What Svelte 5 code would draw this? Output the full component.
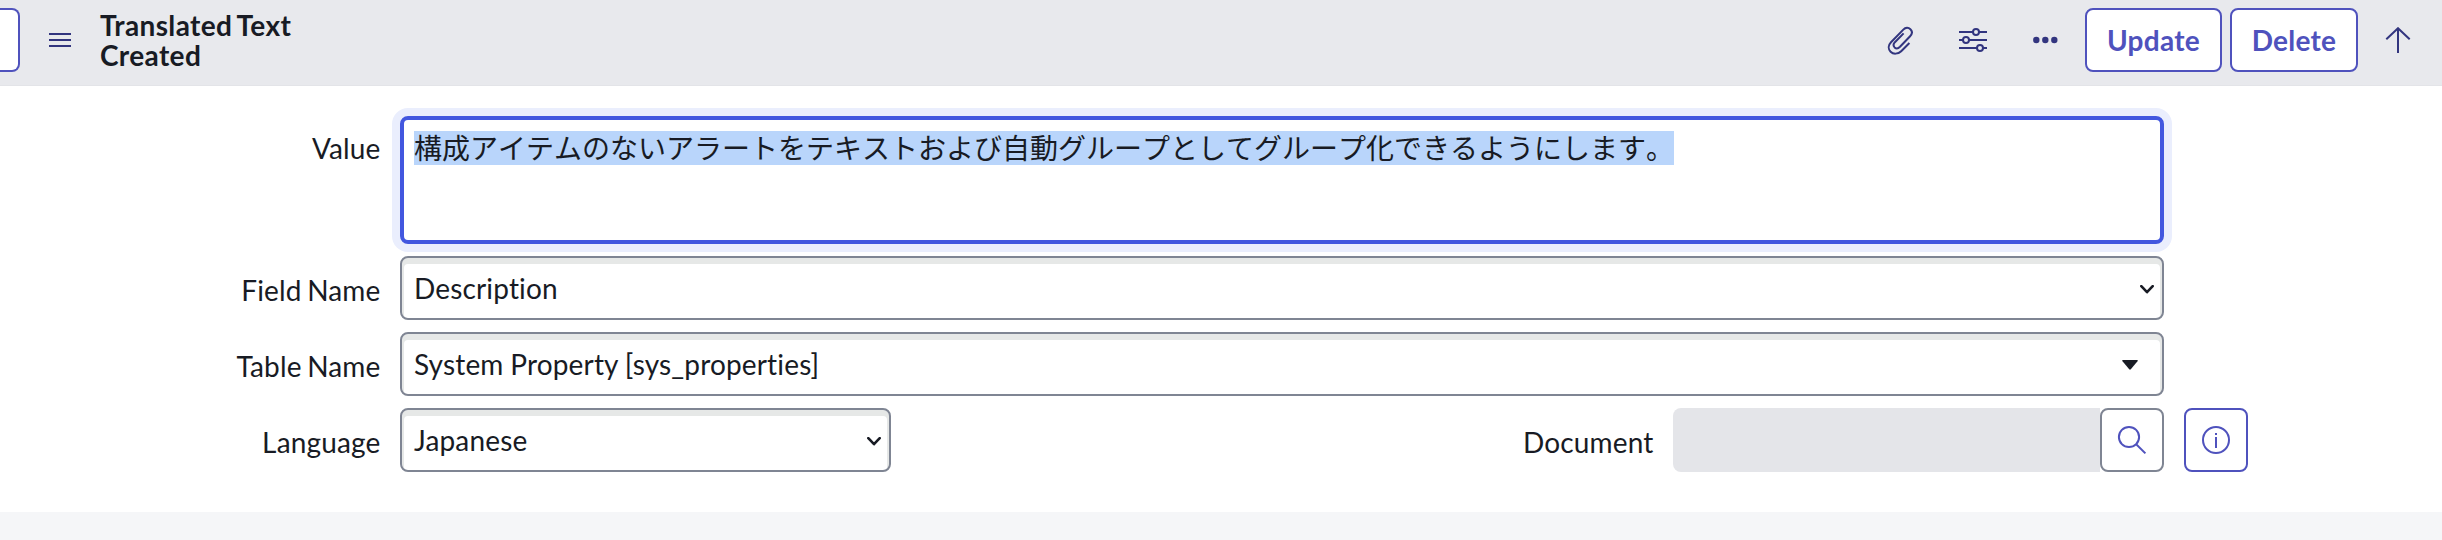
<script>
  let title = 'Translated Text';
  let subtitle = 'Created';
  let value = '構成アイテムのないアラートをテキストおよび自動グループとしてグループ化できるようにします。';
</script>

{#snippet chevron()}
  <svg class="chevron" width="14" height="9" viewBox="0 0 14 9"><path d="M1.3 1.2L7 7.2L12.7 1.2" /></svg>
{/snippet}

<div class="page">
  <header>
    <button class="back" aria-label="Back"></button>
    <svg class="icon menu" width="22" height="14" viewBox="0 0 22 14"><path d="M0 1H22M0 7H22M0 13H22" /></svg>
    <div class="title"><div>{title}</div><div>{subtitle}</div></div>
    <div class="actions">
      <svg class="icon clip" width="26" height="30" viewBox="0 0 26 30">
        <path d="M22.4 18L14.2 26.2C10.9 29.4 6.2 29.3 3.6 26.7C1 24.1 1.1 20.2 4 17.2L16.3 4.6C18.5 2.4 21.4 2.3 23.4 4.2C25.4 6.2 25.2 9 23.1 11.2L13 21.8C11.2 23.6 9.1 23.8 7.6 22.4C6.1 20.9 6.3 19 7.9 17.2L16.6 8.4" />
      </svg>
      <svg class="icon sliders" width="28" height="24" viewBox="0 0 28 24">
        <path d="M0 4H14M20 4H28M0 12H4M10 12H28M0 20H18M24 20H28" />
        <circle cx="17" cy="4" r="3" /><circle cx="7" cy="12" r="3" /><circle cx="21" cy="20" r="3" />
      </svg>
      <svg class="dots" width="25" height="8" viewBox="0 0 25 8">
        <circle cx="3.3" cy="4" r="3.2" /><circle cx="12.3" cy="4" r="3.2" /><circle cx="21.3" cy="4" r="3.2" />
      </svg>
      <button class="btn update">Update</button>
      <button class="btn delete">Delete</button>
      <svg class="icon up" width="26" height="26" viewBox="0 0 26 26"><path d="M13 26V1.5M1.3 12.2L13 1.2L24.7 12.2" /></svg>
    </div>
  </header>

  <main>
    <div class="row value-row">
      <span class="label">Value</span>
      <div class="textarea"><span class="selected">{value}</span></div>
    </div>
    <div class="row">
      <span class="label">Field Name</span>
      <div class="select">Description{@render chevron()}</div>
    </div>
    <div class="row">
      <span class="label">Table Name</span>
      <div class="select table">System Property [sys_properties]
        <svg width="16" height="10" viewBox="0 0 16 10"><path d="M.8 0H15.2Q16.4 0 15.5 1.2L8.8 9.3Q8 10.2 7.2 9.3L.5 1.2Q-.4 0 .8 0Z" /></svg>
      </div>
    </div>
    <div class="row">
      <span class="label">Language</span>
      <div class="select short">Japanese{@render chevron()}</div>
      <span class="label document">Document</span>
      <div class="readonly"></div>
      <button class="square search" aria-label="Search">
        <svg class="icon" width="30" height="30" viewBox="0 0 30 30"><circle cx="12" cy="12" r="10.1" /><path d="M19.2 19.2L28.4 28.4" /></svg>
      </button>
      <button class="square info" aria-label="Information">
        <svg class="icon" width="30" height="30" viewBox="0 0 30 30"><circle cx="15" cy="15" r="13" /><path d="M15 12V23M15 8V10" /></svg>
      </button>
    </div>
  </main>
</div>

<style>
  :global(body) { margin: 0; background: #f5f6f8; }
  .page {
    width: 2442px; height: 540px; overflow: hidden;
    font: 28px/60px Lato, "Noto Sans CJK JP", sans-serif; color: #181b24; background: #f5f6f8;
    font-variant-ligatures: none; letter-spacing: 0.16px;
  }
  header {
    display: flex; align-items: center; box-sizing: border-box; height: 86px;
    padding: 0 31px 5px 0; background: #e8e9ed; border-bottom: 1px solid #e3e4e8;
  }
  button { display: block; box-sizing: border-box; margin: 0; padding: 0; height: 64px; background: #fff; border: 2px solid #4f52bd; border-radius: 8px; font: inherit; flex: none; }
  .back { width: 20px; border-left: 0; border-radius: 0 8px 8px 0; }
  svg { display: block; flex: none; }
  .icon { fill: none; stroke: #32357f; stroke-width: 2; }
  .menu { margin-left: 29px; }
  .title { margin-left: 29px; font-weight: 700; line-height: 30px; white-space: nowrap; letter-spacing: 0.36px; word-spacing: -2px; }
  .actions { display: flex; align-items: center; margin-left: auto; }
  .sliders { margin-left: 46px; }
  .dots { margin-left: 46px; fill: #32357f; }
  .btn { color: #4f52bd; font-weight: 700; letter-spacing: 0.25px; }
  .update { width: 137px; margin-left: 27px; }
  .delete { width: 128px; margin-left: 8px; }
  .up { margin-left: 27px; }
  main { display: flex; flex-direction: column; gap: 12px; box-sizing: border-box; height: 426px; padding: 30px 0 0; background: #fff; }
  .row { display: flex; height: 64px; }
  .value-row { height: 128px; }
  .label { width: 380.5px; margin-right: 19.5px; line-height: 68px; text-align: right; white-space: nowrap; word-spacing: -1.8px; }
  .value-row .label { line-height: 64px; }
  .textarea {
    box-sizing: border-box; width: 1764px; height: 128px; padding: 8px 10px; line-height: 40px;
    border: 4px solid #4257df; border-radius: 8px; box-shadow: 0 0 0 8px #eaeefd;
    font-kerning: none; letter-spacing: 0; text-spacing-trim: space-all; white-space: nowrap;
  }
  .selected { background: #b9d5fb; }
  .select {
    display: flex; align-items: center; justify-content: space-between; box-sizing: border-box;
    width: 1764px; height: 64px; padding: 0 8px 0 12px; white-space: nowrap; word-spacing: -0.6px;
    border: 2px solid #7f8593; border-radius: 8px; box-shadow: inset 0 4px 0 2px #e6e8e7;
  }
  .select.short { width: 491px; }
  .chevron { fill: none; stroke: #181b24; stroke-width: 2.6; stroke-linecap: round; stroke-linejoin: round; margin-top: 2px; }
  .table { padding-right: 24px; }
  .table svg { fill: #181b24; margin-top: 2px; }
  .document { width: 762.5px; }
  .readonly { width: 427px; background: #e4e5e9; border-radius: 8px 0 0 8px; }
  .square { display: flex; align-items: center; justify-content: center; width: 64px; }
  .square .icon { stroke: #4f52bd; }
  .search { border-color: #7f8593; }
  .info { margin-left: 20px; }
</style>
